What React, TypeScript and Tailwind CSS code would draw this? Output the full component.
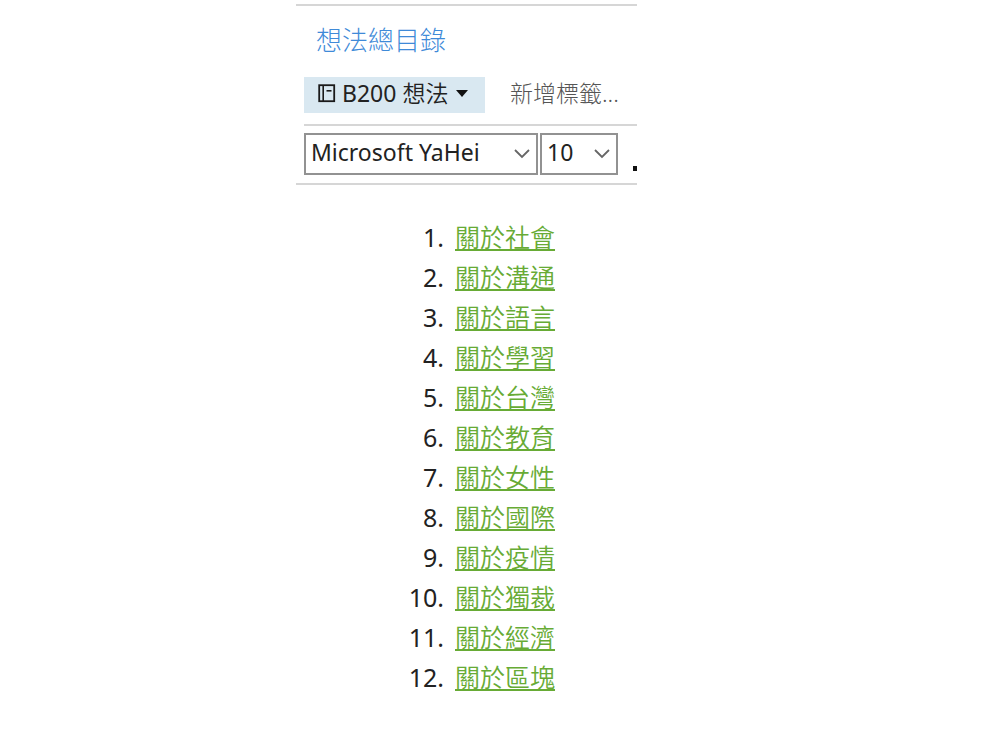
import { useState } from "react";

const topics = [
  "關於社會",
  "關於溝通",
  "關於語言",
  "關於學習",
  "關於台灣",
  "關於教育",
  "關於女性",
  "關於國際",
  "關於疫情",
  "關於獨裁",
  "關於經濟",
  "關於區塊",
];

function NotebookIcon() {
  return (
    <svg className="h-5 w-[18px] shrink-0" viewBox="0 0 18 20" fill="none" stroke="#1a1a1a" aria-hidden="true">
      <rect x="1.2" y="2.2" width="15" height="16" strokeWidth="1.8" />
      <path d="M5.2 2v16" strokeWidth="1.6" />
      <path d="M8.5 7.8h5" strokeWidth="1.6" />
    </svg>
  );
}

function Chevron() {
  return (
    <svg
      className="pointer-events-none absolute top-4 right-2 h-2.5 w-4"
      viewBox="0 0 16 10"
      fill="none"
      stroke="#666"
      strokeWidth="1.8"
      aria-hidden="true"
    >
      <path d="M1 1l7 7 7-7" />
    </svg>
  );
}

type SelectBoxProps = {
  label: string;
  value: string;
  options: string[];
  className: string;
  onChange: (value: string) => void;
};

function SelectBox({ label, value, options, className, onChange }: SelectBoxProps) {
  return (
    <div className={`relative ${className}`}>
      <select
        aria-label={label}
        value={value}
        onChange={(e) => onChange(e.target.value)}
        className="block h-[42px] w-full appearance-none border-2 border-[#929292] bg-white pb-1 pl-[5px] text-[23px] leading-8 text-[#222]"
      >
        {options.map((option) => (
          <option key={option}>{option}</option>
        ))}
      </select>
      <Chevron />
    </div>
  );
}

export default function App() {
  const [font, setFont] = useState("Microsoft YaHei");
  const [size, setSize] = useState("10");

  return (
    <main className="min-h-screen bg-white pt-1 pl-74 font-['Noto_Sans','Noto_Sans_CJK_TC',sans-serif] text-[#222]">
      <div className="w-full max-w-[341px]">
        <header className="border-y-2 border-[#d6d6d6]">
          <h1 className="px-5 pt-[13px] text-[26px] leading-10 font-light font-['Noto_Sans_CJK_TC',sans-serif] text-[#3f8ad8]">
            想法總目錄
          </h1>

          <div className="ml-2 flex items-center border-b-2 border-[#d6d6d6] pt-[18px] pb-[11px]">
            <button type="button" className="flex h-9 w-[181px] items-center bg-[#d9e8f1] pb-1 pl-3.5 text-[23px] leading-8">
              <NotebookIcon />
              <span className="ml-1.5">
                B200 <span className="font-[350]">想法</span>
              </span>
              <svg className="ml-2 h-[7px] w-3 shrink-0" viewBox="0 0 12 7" aria-hidden="true">
                <path d="M0 0h12L6 7z" fill="#111" />
              </svg>
            </button>
            <button type="button" className="ml-[25px] pb-1 text-[23px] leading-8 font-light text-[#555]">
              新增標籤...
            </button>
          </div>

          <div className="ml-2 flex gap-0.5 overflow-hidden pt-[7px] pb-2">
            <SelectBox
              label="字型"
              value={font}
              options={["Microsoft YaHei", "Arial"]}
              className="w-[234px]"
              onChange={setFont}
            />
            <SelectBox
              label="字級"
              value={size}
              options={["10", "12", "14"]}
              className="w-[78px]"
              onChange={setSize}
            />
            <button type="button" aria-label="更多" className="ml-auto flex h-[42px] w-1 items-end pb-1">
              <span className="h-[5px] w-1 bg-[#111]" />
            </button>
          </div>
        </header>

        <ol className="pt-8 text-[25px] leading-10">
          {topics.map((topic, i) => (
            <li key={topic} className="flex gap-[11px]">
              <span className="w-37 text-right">{i + 1}.</span>
              <a
                href="#"
                className="font-[350] text-[#67ab35] underline decoration-2 underline-offset-2"
              >
                {topic}
              </a>
            </li>
          ))}
        </ol>
      </div>
    </main>
  );
}
